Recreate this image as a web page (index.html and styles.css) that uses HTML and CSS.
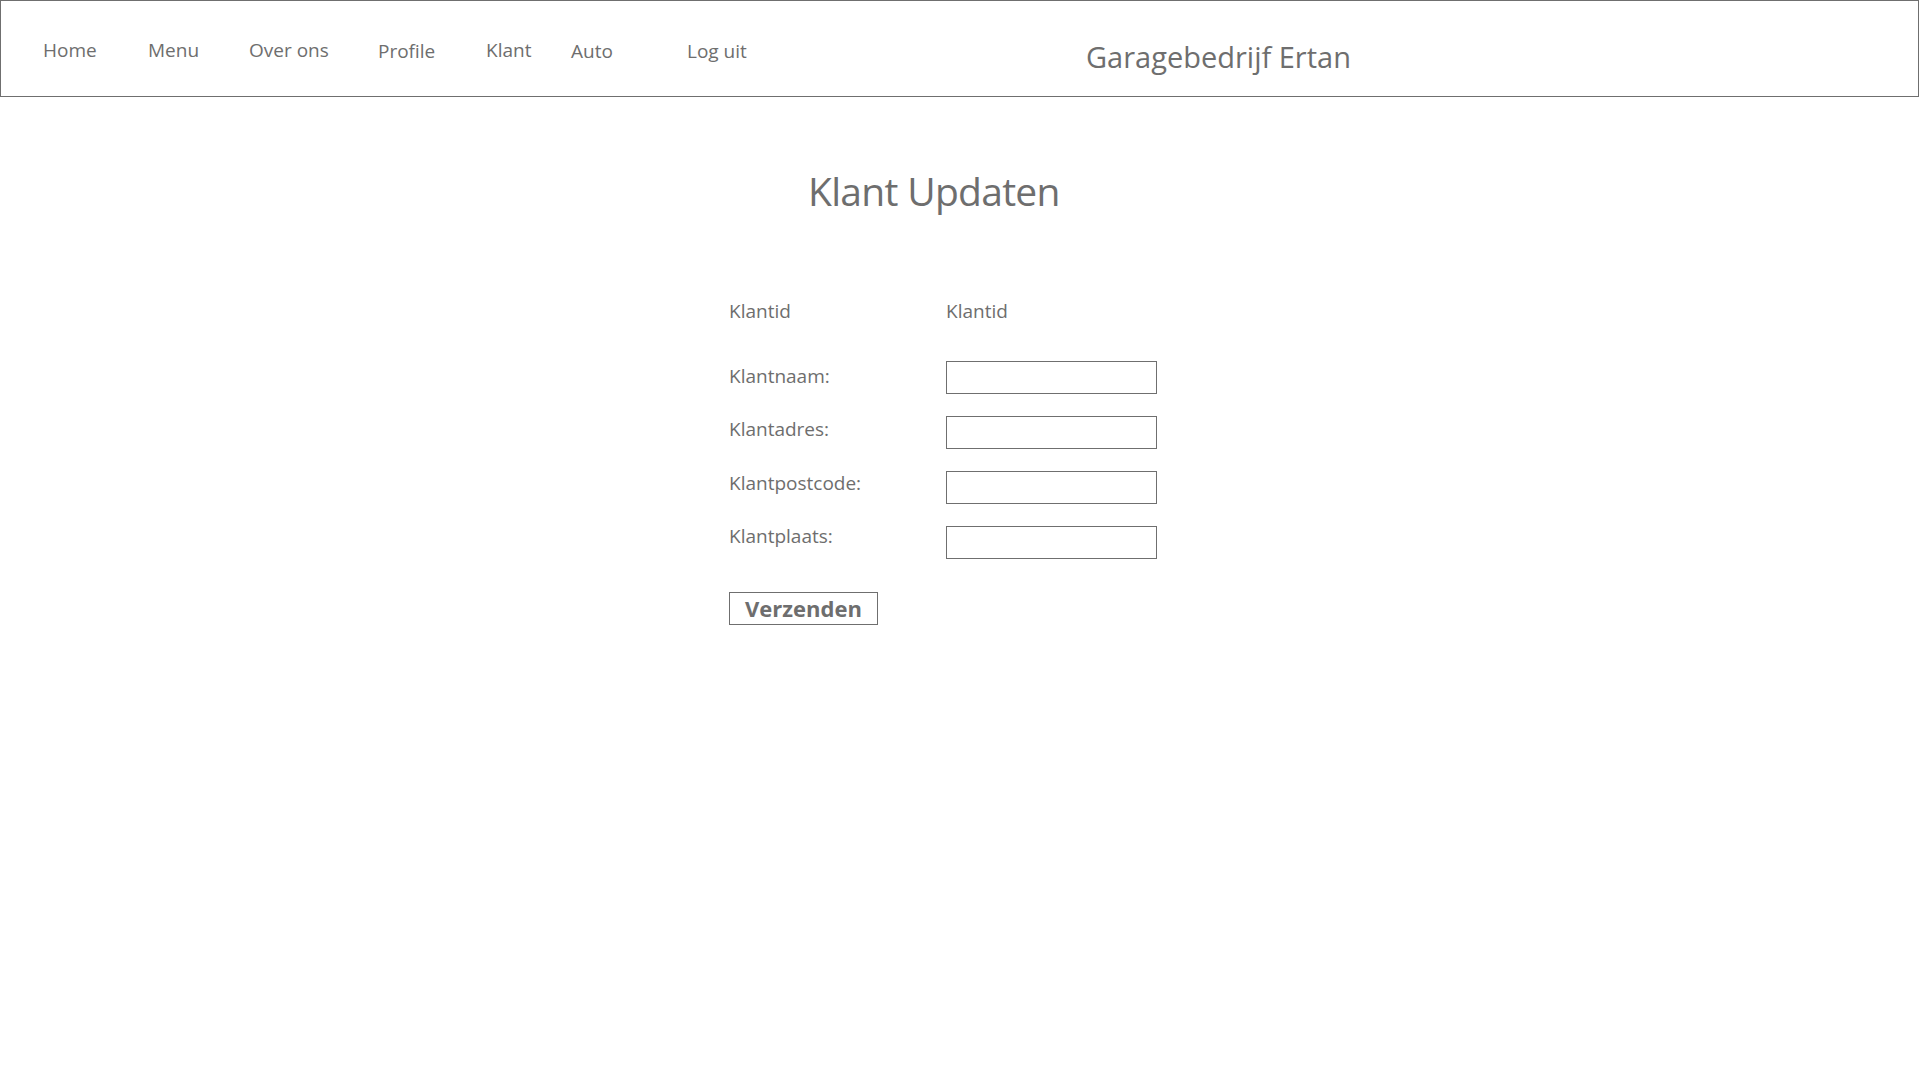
FILE: index.html
```html
<!DOCTYPE html>
<html lang="nl">
<head>
<meta charset="utf-8">
<title>Klant Updaten</title>
<link rel="stylesheet" href="styles.css">
</head>
<body>
<header class="topbar">
  <nav class="nav">
    <a class="nav-link" href="#">Home</a>
    <a class="nav-link" href="#">Menu</a>
    <a class="nav-link" href="#">Over ons</a>
    <a class="nav-link nav-low" href="#">Profile</a>
    <a class="nav-link" href="#">Klant</a>
    <a class="nav-link nav-low" href="#">Auto</a>
    <a class="nav-link nav-low" href="#">Log uit</a>
  </nav>
  <div class="brand">Garagebedrijf Ertan</div>
</header>
<main class="content">
  <h1 class="page-title">Klant Updaten</h1>
  <form class="form">
    <div class="row row-id">
      <span class="label">Klantid</span>
      <span class="value">Klantid</span>
    </div>
    <div class="row">
      <label class="label" for="naam">Klantnaam:</label>
      <input class="field" id="naam" type="text">
    </div>
    <div class="row">
      <label class="label" for="adres">Klantadres:</label>
      <input class="field" id="adres" type="text">
    </div>
    <div class="row">
      <label class="label" for="postcode">Klantpostcode:</label>
      <input class="field" id="postcode" type="text">
    </div>
    <div class="row">
      <label class="label" for="plaats">Klantplaats:</label>
      <input class="field" id="plaats" type="text">
    </div>
    <button class="submit" type="submit">Verzenden</button>
  </form>
</main>
</body>
</html>
```
FILE: styles.css
```css
* {
  box-sizing: border-box;
}

html, body {
  margin: 0;
  padding: 0;
  background: #ffffff;
}

body {
  font-family: "Open Sans", "Noto Sans", "Liberation Sans", sans-serif;
  color: #6e6e6e;
  width: 1920px;
}

.topbar {
  display: flex;
  align-items: flex-start;
  height: 97px;
  width: 1919px;
  border: 1px solid #6f6f6f;
  padding: 37px 0 0 42px;
}

.nav {
  display: grid;
  grid-template-columns: 105px 101px 129px 108px 85px 116px 401px;
}

.nav-link {
  font-size: 19px;
  line-height: 24px;
  color: #6e6e6e;
  text-decoration: none;
}

.nav-low {
  position: relative;
  top: 1px;
}

.brand {
  font-size: 29px;
  line-height: 36px;
  margin-top: 1px;
  margin-left: -2px;
}

.content {
  padding: 70px 0 0 729px;
}

.page-title {
  margin: 0 0 0 79px;
  font-size: 39px;
  line-height: 48px;
  font-weight: 400;
  letter-spacing: -0.7px;
}

.form {
  margin-top: 84px;
  display: flex;
  flex-direction: column;
  align-items: flex-start;
}

.row {
  display: grid;
  grid-template-columns: 217px 211px;
  align-items: start;
  height: 33px;
  margin-bottom: 22px;
}

.row-id {
  height: 24px;
  margin-bottom: 38px;
}

.label,
.value {
  font-size: 19px;
  line-height: 24px;
}

.row:nth-child(2) .label { margin-top: 3px; }
.row:nth-child(3) .label { margin-top: 1px; }
.row:nth-child(4) .label { margin-top: 0; }
.row:nth-child(5) .label { margin-top: -2px; }

.field {
  width: 211px;
  height: 33px;
  border: 1px solid #6f6f6f;
  border-radius: 0;
  background: #ffffff;
  padding: 0 6px;
  font: inherit;
  outline: none;
}

.row:last-of-type {
  margin-bottom: 0;
}

.submit {
  margin-top: 33px;
  width: 149px;
  height: 33px;
  border: 1px solid #6f6f6f;
  border-radius: 0;
  background: #ffffff;
  color: #6e6e6e;
  font-family: "Open Sans", "Noto Sans", "Liberation Sans", sans-serif;
  font-size: 22px;
  font-weight: 700;
  line-height: 29px;
  padding: 0;
}
```
